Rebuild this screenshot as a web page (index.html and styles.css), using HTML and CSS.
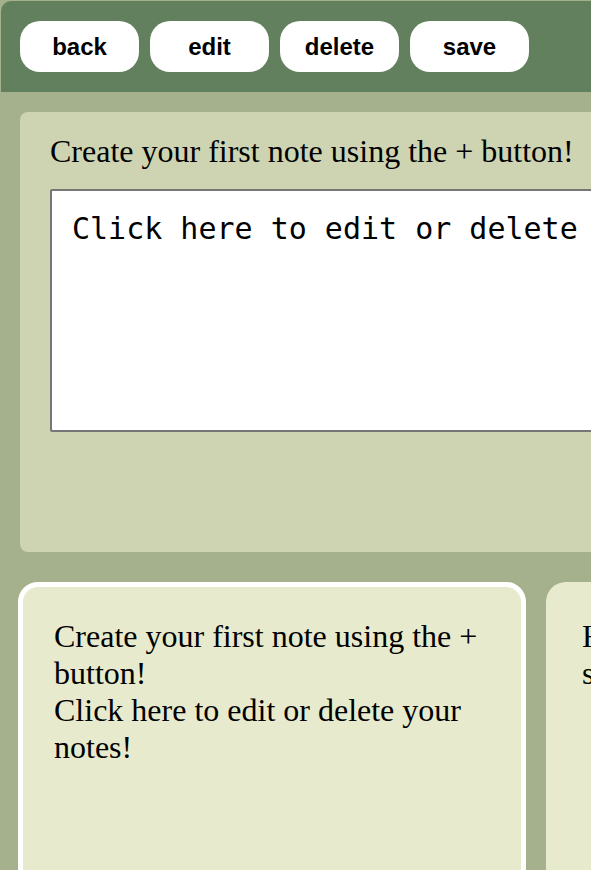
FILE: index.html
```html
<!DOCTYPE html>
<html lang="en">
<head>
<meta charset="utf-8">
<title>Notes</title>
<link rel="stylesheet" href="styles.css">
</head>
<body>
<div class="app">
  <header class="toolbar">
    <button class="tool-btn">back</button>
    <button class="tool-btn">edit</button>
    <button class="tool-btn">delete</button>
    <button class="tool-btn">save</button>
  </header>
  <main class="main">
    <section class="editor">
      <p class="editor-title">Create your first note using the + button!</p>
      <textarea class="editor-text" spellcheck="false">Click here to edit or delete your notes!</textarea>
    </section>
    <div class="cards">
      <article class="card card-selected">
        <p class="card-text">Create your first note using the + button!<br>Click here to edit or delete your notes!</p>
      </article>
      <article class="card">
        <p class="card-text">Here you can find your notes, saved for later.</p>
      </article>
    </div>
  </main>
</div>
</body>
</html>
```
FILE: styles.css
```css
html, body {
  margin: 0;
  padding: 0;
  overflow: hidden;
  background: #a5b08d;
  height: 100%;
}

.app {
  margin: 1px 0 0 1px;
  width: 1400px;
}

.toolbar {
  display: flex;
  gap: 11px;
  padding: 20px 19px;
  background: #62805d;
  border-top-left-radius: 10px;
}

.tool-btn {
  width: 119px;
  height: 51px;
  border: none;
  border-radius: 20px;
  background: #ffffff;
  color: #000000;
  font-family: "Liberation Sans", Arial, sans-serif;
  font-weight: bold;
  font-size: 24px;
  padding: 0;
}

.main {
  padding: 20px 19px;
}

.editor {
  width: 1100px;
  height: 440px;
  box-sizing: border-box;
  background: #ced4b2;
  border-radius: 8px;
  padding: 21px 30px;
}

.editor-title {
  margin: 0;
  font-family: "Liberation Serif", "Times New Roman", serif;
  font-size: 32px;
  color: #000;
}

.editor-text {
  display: block;
  margin-top: 19px;
  width: 1000px;
  height: 243px;
  box-sizing: border-box;
  border: 2px solid #767676;
  border-radius: 2px;
  background: #ffffff;
  padding: 20px 20px;
  font-family: "DejaVu Sans Mono", monospace;
  font-size: 30px;
  color: #000;
  resize: none;
  white-space: pre;
  overflow: hidden;
}

.cards {
  display: flex;
  gap: 20px;
  margin-top: 30px;
  margin-left: -2px;
}

.card {
  width: 508px;
  height: 400px;
  flex: none;
  box-sizing: border-box;
  background: #e7eacd;
  border: 5px solid transparent;
  border-radius: 20px;
  padding: 31px 31px 30px;
}

.card-selected {
  border-color: #ffffff;
}

.card-text {
  margin: 0;
  font-family: "Liberation Serif", "Times New Roman", serif;
  font-size: 32px;
  color: #000;
}
```
